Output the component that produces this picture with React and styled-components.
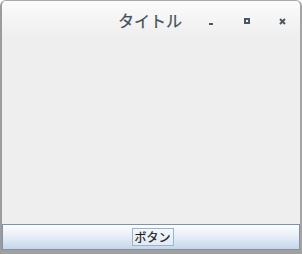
import styled, { createGlobalStyle } from 'styled-components';

const GlobalStyle = createGlobalStyle`
  html, body {
    margin: 0;
    padding: 0;
    background: #ffffff;
  }
  body {
    font-family: "Noto Sans CJK JP", "Liberation Sans", sans-serif;
  }
`;

export default function App() {
  return (
    <>
      <GlobalStyle />
      <Frame>
        <TitleBar>
          <Title>タイトル</Title>
          <Controls>
            <ControlButton aria-label="minimize">
              <Minimize />
            </ControlButton>
            <ControlButton aria-label="maximize">
              <Maximize />
            </ControlButton>
            <ControlButton aria-label="close">
              <svg width="7" height="7" viewBox="0 0 7 7">
                <path d="M1 1 L6 6 M6 1 L1 6" stroke="#4b5863" strokeWidth="2" />
              </svg>
            </ControlButton>
          </Controls>
        </TitleBar>
        <Content />
        <ButtonBar>
          <PushButton>ボタン</PushButton>
        </ButtonBar>
      </Frame>
    </>
  );
}

const Frame = styled.div`
  width: 302px;
  height: 254px;
  box-sizing: border-box;
  display: flex;
  flex-direction: column;
  border: 1px solid #a8a8a8;
  border-left: 2px solid #9c9c9c;
  border-right: 2px solid #a4a4a4;
  border-bottom: 4px solid #a0a0a0;
  border-radius: 6px 6px 0 0;
  background: #eeeeee;
  overflow: hidden;
`;

const TitleBar = styled.div`
  height: 38px;
  flex-shrink: 0;
  display: flex;
  align-items: center;
  background: linear-gradient(#fbfbfb, #eeeeee);
  position: relative;
`;

const Title = styled.div`
  position: absolute;
  left: 116px;
  top: 7px;
  font-size: 16px;
  font-weight: 400;
  color: #45515c;
  -webkit-text-stroke: 0.25px #45515c;
`;

const Controls = styled.div`
  margin-left: auto;
  display: flex;
  align-items: center;
  gap: 26px;
  padding-right: 13px;
  padding-top: 2px;
`;

const ControlButton = styled.div`
  width: 9px;
  height: 9px;
  display: flex;
  align-items: center;
  justify-content: center;
`;

const Minimize = styled.div`
  width: 4px;
  height: 2px;
  margin-top: 5px;
  margin-left: -4px;
  background: #4b5863;
`;

const Maximize = styled.div`
  width: 6px;
  height: 6px;
  margin-left: -2px;
  box-sizing: border-box;
  border: 2px solid #4b5863;
`;

const Content = styled.div`
  flex: 1;
  background: #eeeeee;
`;

const ButtonBar = styled.div`
  height: 26px;
  box-sizing: border-box;
  flex-shrink: 0;
  display: flex;
  align-items: center;
  justify-content: center;
  border: 1px solid #8193aa;
  background: linear-gradient(#fbfcfe, #e9eff7 45%, #c5d6ea);
`;

const PushButton = styled.button`
  height: 18px;
  width: 42px;
  margin-left: 3px;
  padding: 0;
  box-sizing: border-box;
  border: 1px solid #9fb2c7;
  background: linear-gradient(#f4f7fb, #e2eaf3);
  font-family: "Noto Sans CJK JP", "Liberation Sans", sans-serif;
  font-size: 12px;
  line-height: 14px;
  color: #1a1a1a;
  -webkit-text-stroke: 0.2px #1a1a1a;
`;
